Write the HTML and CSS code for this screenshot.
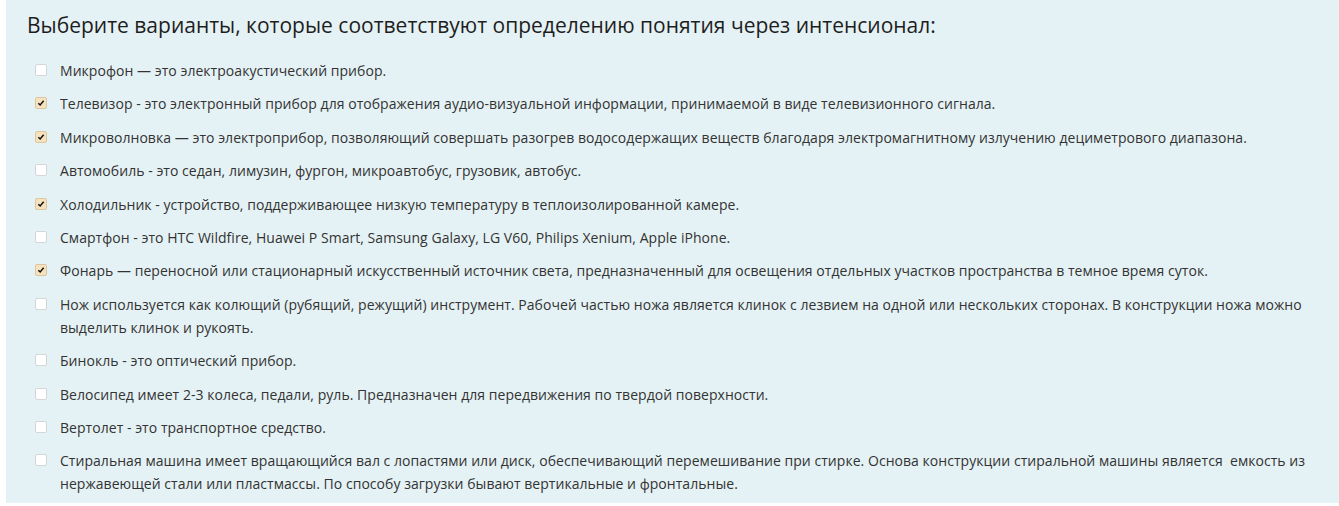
FILE: index.html
```html
<!DOCTYPE html>
<html lang="ru">
<head>
<meta charset="utf-8">
<link rel="stylesheet" href="styles.css">
</head>
<body>
<div class="panel">
  <h1 class="title">Выберите варианты, которые соответствуют определению понятия через интенсионал:</h1>
  <ul class="options">
    <li class="opt"><span class="box"></span><span class="txt">Микрофон — это электроакустический прибор.</span></li>
    <li class="opt"><span class="box on"><svg viewBox="0 0 12 12"><path d="M2.8 6.2 L5 8.4 L9.2 3.4" fill="none" stroke="#111" stroke-width="1.8"/></svg></span><span class="txt">Телевизор - это электронный прибор для отображения аудио-визуальной информации, принимаемой в виде телевизионного сигнала.</span></li>
    <li class="opt"><span class="box on"><svg viewBox="0 0 12 12"><path d="M2.8 6.2 L5 8.4 L9.2 3.4" fill="none" stroke="#111" stroke-width="1.8"/></svg></span><span class="txt">Микроволновка — это электроприбор, позволяющий совершать разогрев водосодержащих веществ благодаря электромагнитному излучению дециметрового диапазона.</span></li>
    <li class="opt"><span class="box"></span><span class="txt">Автомобиль - это седан, лимузин, фургон, микроавтобус, грузовик, автобус.</span></li>
    <li class="opt"><span class="box on"><svg viewBox="0 0 12 12"><path d="M2.8 6.2 L5 8.4 L9.2 3.4" fill="none" stroke="#111" stroke-width="1.8"/></svg></span><span class="txt">Холодильник - устройство, поддерживающее низкую температуру в теплоизолированной камере.</span></li>
    <li class="opt"><span class="box"></span><span class="txt">Смартфон - это HTC Wildfire, Huawei P Smart, Samsung Galaxy, LG V60, Philips Xenium, Apple iPhone.</span></li>
    <li class="opt"><span class="box on"><svg viewBox="0 0 12 12"><path d="M2.8 6.2 L5 8.4 L9.2 3.4" fill="none" stroke="#111" stroke-width="1.8"/></svg></span><span class="txt">Фонарь — переносной или стационарный искусственный источник света, предназначенный для освещения отдельных участков пространства в темное время суток.</span></li>
    <li class="opt"><span class="box"></span><span class="txt">Нож используется как колющий (рубящий, режущий) инструмент. Рабочей частью ножа является клинок с лезвием на одной или нескольких сторонах. В конструкции ножа можно выделить клинок и рукоять.</span></li>
    <li class="opt"><span class="box"></span><span class="txt">Бинокль - это оптический прибор.</span></li>
    <li class="opt"><span class="box"></span><span class="txt">Велосипед имеет 2-3 колеса, педали, руль. Предназначен для передвижения по твердой поверхности.</span></li>
    <li class="opt"><span class="box"></span><span class="txt">Вертолет - это транспортное средство.</span></li>
    <li class="opt"><span class="box"></span><span class="txt">Стиральная машина имеет вращающийся вал с лопастями или диск, обеспечивающий перемешивание при стирке. Основа конструкции стиральной машины является&nbsp; емкость из нержавеющей стали или пластмассы. По способу загрузки бывают вертикальные и фронтальные.</span></li>
  </ul>
</div>
</body>
</html>
```
FILE: styles.css
```css
html, body {
  margin: 0;
  padding: 0;
  background: #ffffff;
}
body {
  font-family: "Open Sans", "Noto Sans", sans-serif;
  color: #333;
}
.panel {
  margin-left: 6px;
  height: 503px;
  background: #e5f2f5;
  padding: 9px 0 0 21px;
  box-sizing: border-box;
}
.title {
  margin: 0;
  font-weight: 400;
  font-size: 21px;
  line-height: 32px;
  color: #1e1e1e;
}
.options {
  list-style: none;
  margin: 18px 0 0;
  padding: 0 12px 0 8px;
}
.opt {
  display: flex;
  align-items: flex-start;
  gap: 13px;
  font-size: 14px;
  letter-spacing: 0.04px;
  line-height: 23px;
  margin-bottom: 10.4px;
}
.box {
  flex: none;
  width: 10px;
  height: 10px;
  margin-top: 5px;
  border: 1px solid #d2d6d7;
  border-radius: 2px;
  background: #fff;
  display: flex;
  align-items: center;
  justify-content: center;
}
.box.on {
  background: #f6e3be;
  border-color: #dbc79f;
}
.box svg { width: 10px; height: 10px; display: block; }
```
